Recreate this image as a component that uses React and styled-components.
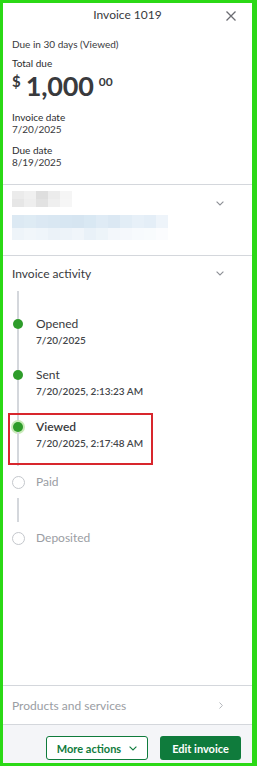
import styled, { createGlobalStyle } from 'styled-components';

const GlobalStyle = createGlobalStyle`
  html, body { margin: 0; padding: 0; }
  body {
    font-family: Lato, "Liberation Sans", sans-serif;
    color: #393a3d;
    background: #fff;
  }
  * { box-sizing: border-box; }
`;

const grayCells = ['#ebebeb', '#f0f0f0', '#dedede', '#ececec', '#f5f5f5', '#e6e6e6', '#eeeeee', '#e2e2e2', '#efefef', '#f6f6f6'];
const blueCells = [
    '#dce9f3', '#deebf4', '#dbe8f3', '#d9e7f2', '#d7e6f2', '#d6e5f1', '#d9e8f3', '#dfebf5', '#dbe8f3', '#e2edf6', '#e7f0f8', '#e4eef7', '#eef4fa',
    '#eef4f9', '#f1f6fa', '#eff5fa', '#ebf2f8', '#edf3f9', '#f0f5fa', '#e9f1f8', '#edf4f9', '#f3f7fb', '#f5f8fc', '#f7fafd', '#f8fbfd', '#fbfcfe',
];

const steps = [
    { label: 'Opened', date: '7/20/2025', done: true },
    { label: 'Sent', date: '7/20/2025, 2:13:23 AM', done: true },
    { label: 'Viewed', date: '7/20/2025, 2:17:48 AM', done: true, current: true },
    { label: 'Paid' },
    { label: 'Deposited', last: true },
];
const rowHeights = [51, 52, 55, 56, 40];

function Chevron({ dir = 'down', color = '#8d9096' }) {
    return dir === 'down'
        ? <svg width="8" height="5" viewBox="0 0 8 5"><path d="M0.6 0.6 L4 4 L7.4 0.6" fill="none" stroke={color} strokeWidth="1.1" /></svg>
        : <svg width="4" height="7" viewBox="0 0 4 7"><path d="M0.5 0.5 L3.4 3.5 L0.5 6.5" fill="none" stroke={color} strokeWidth="1" /></svg>;
}

export default function App() {
    return <>
        <GlobalStyle />
        <Panel>
            <Header>
                <span />
                <Title>Invoice 1019</Title>
                <Close aria-label="Close">
                    <svg width="10" height="10" viewBox="0 0 10 10"><path d="M0.5 0.5 L9.5 9.5 M9.5 0.5 L0.5 9.5" stroke="#6b6c72" strokeWidth="1.3" /></svg>
                </Close>
            </Header>

            <Summary>
                <Status>Due in 30 days (Viewed)</Status>
                <TotalLabel>Total due</TotalLabel>
                <Amount>
                    <Dollar>$</Dollar>
                    <Big>1,000</Big>
                    <Cents>00</Cents>
                </Amount>
                <Field $top={9}>
                    <FieldLabel>Invoice date</FieldLabel>
                    <FieldValue>7/20/2025</FieldValue>
                </Field>
                <Field $top={9}>
                    <FieldLabel>Due date</FieldLabel>
                    <FieldValue>8/19/2025</FieldValue>
                </Field>
            </Summary>

            <Customer>
                <Blurs>
                    <PixelGrid $cols={5} $w={12} $h={8}>
                        {grayCells.map((c, i) => <Pixel key={i} $color={c} />)}
                    </PixelGrid>
                    <PixelGrid $cols={13} $w={12} $h={12.5}>
                        {blueCells.map((c, i) => <Pixel key={i} $color={c} />)}
                    </PixelGrid>
                </Blurs>
                <ChevronBox $top={10}><Chevron /></ChevronBox>
            </Customer>

            <SectionHead>
                <SectionTitle>Invoice activity</SectionTitle>
                <Chevron />
            </SectionHead>

            <Timeline>
                <Lead><Line $h={17} /></Lead>
                {steps.map((s, i) => (
                    <Step key={s.label} $h={rowHeights[i]} $highlight={s.current}>
                        <Rail>
                            {s.done ? <Line $h={11} /> : <Gap $h={10} />}
                            {s.done ? <Dot $ring={s.current} /> : <Circle />}
                            {!s.last && <Line $grow $gapTop={s.done ? 0 : 9} />}
                        </Rail>
                        <StepText>
                            <StepLabel $done={s.done} $strong={s.current}>{s.label}</StepLabel>
                            {s.date && <StepDate>{s.date}</StepDate>}
                        </StepText>
                    </Step>
                ))}
            </Timeline>

            <Filler />

            <LinkRow>
                <LinkText>Products and services</LinkText>
                <Chevron dir="right" color="#b3b6bb" />
            </LinkRow>

            <Footer>
                <OutlineButton>More actions <Chevron color="#0f7b3c" /></OutlineButton>
                <PrimaryButton>Edit invoice</PrimaryButton>
            </Footer>
        </Panel>
    </>;
}

const Panel = styled.div`
    height: 766px;
    display: flex;
    flex-direction: column;
    border: 3px solid #2bd916;
    border-right-width: 5px;
    background: #fff;
`;

const Header = styled.header`
    height: 24px;
    display: grid;
    grid-template-columns: 1fr auto 1fr;
    align-items: center;
`;

const Title = styled.div`
    font-size: 12px;
    line-height: 24px;
    color: #393a3d;
`;

const Close = styled.div`
    justify-self: end;
    display: flex;
    padding-right: 16px;
    padding-top: 1px;
`;

const Summary = styled.section`
    padding: 10px 9px 16px;
    border-bottom: 1px solid #d4d7dc;
`;

const Status = styled.div`
    font-size: 10px;
    line-height: 14px;
`;

const TotalLabel = styled.div`
    font-size: 10px;
    line-height: 14px;
    margin-top: 5px;
    color: #2b2c2f;
`;

const Amount = styled.div`
    display: flex;
    align-items: flex-start;
    height: 32px;
    color: #393a3d;
    font-weight: 700;
`;

const Dollar = styled.span`
    font-size: 15px;
    line-height: 15px;
    margin-top: 4px;
    margin-right: 5px;
`;

const Big = styled.span`
    font-size: 27px;
    line-height: 32px;
    letter-spacing: -0.2px;
`;

const Cents = styled.span`
    font-size: 12px;
    line-height: 12px;
    margin-top: 6px;
    margin-left: 5px;
`;

const Field = styled.div`
    margin-top: ${p => p.$top}px;
`;

const FieldLabel = styled.div`
    font-size: 10px;
    line-height: 12px;
    color: #2b2c2f;
`;

const FieldValue = styled.div`
    font-size: 10px;
    line-height: 12px;
`;

const Customer = styled.section`
    height: 71px;
    display: flex;
    justify-content: space-between;
    padding: 6px 28px 0 9px;
    border-bottom: 1px solid #d4d7dc;
`;

const Blurs = styled.div`
    display: flex;
    flex-direction: column;
    gap: 8px;
`;

const PixelGrid = styled.div`
    display: grid;
    grid-template-columns: repeat(${p => p.$cols}, ${p => p.$w}px);
    grid-auto-rows: ${p => p.$h}px;
    filter: blur(0.6px);
`;

const Pixel = styled.div`
    background: ${p => p.$color};
`;

const ChevronBox = styled.div`
    display: flex;
    align-items: flex-start;
    padding-top: ${p => p.$top}px;
`;

const SectionHead = styled.div`
    height: 35px;
    display: flex;
    align-items: center;
    justify-content: space-between;
    padding: 0 28px 0 9px;
`;

const SectionTitle = styled.div`
    font-size: 12px;
`;

const Timeline = styled.div`
    padding-left: 9px;
`;

const Lead = styled.div`
    width: 12px;
    display: flex;
    justify-content: center;
`;

const Step = styled.div`
    position: relative;
    height: ${p => p.$h}px;
    display: grid;
    grid-template-columns: 12px 1fr;
    column-gap: 12px;

    ${p => p.$highlight && `
        &::after {
            content: '';
            position: absolute;
            left: -4px;
            top: 2px;
            width: 141px;
            height: 48px;
            border: 2px solid #d8262d;
        }
    `}
`;

const Rail = styled.div`
    display: flex;
    flex-direction: column;
    align-items: center;
`;

const Line = styled.div`
    width: 2px;
    background: #d4d7dc;
    height: ${p => p.$h ? `${p.$h}px` : 'auto'};
    flex: ${p => p.$grow ? 1 : 'none'};
    margin-top: ${p => p.$gapTop || 0}px;
`;

const Gap = styled.div`
    height: ${p => p.$h}px;
    flex: none;
`;

const Dot = styled.div`
    width: 10px;
    height: 10px;
    flex: none;
    border-radius: 50%;
    background: #2e9c2a;
    box-shadow: ${p => p.$ring ? '0 0 0 2px #c8eab8' : 'none'};
`;

const Circle = styled.div`
    width: 13px;
    height: 13px;
    flex: none;
    border-radius: 50%;
    border: 1.5px solid #c4c7cc;
`;

const StepText = styled.div`
    padding-top: 8px;
`;

const StepLabel = styled.div`
    font-size: 12px;
    line-height: 16px;
    color: ${p => p.$done ? '#393a3d' : '#9a9da3'};
    font-weight: ${p => p.$strong ? 600 : 400};
`;

const StepDate = styled.div`
    font-size: 10px;
    line-height: 16px;
    font-weight: 600;
    color: #44464a;
`;

const Filler = styled.div`
    flex: 1;
`;

const LinkRow = styled.div`
    height: 39px;
    border-top: 1px solid #d4d7dc;
    display: flex;
    align-items: center;
    justify-content: space-between;
    padding: 0 29px 0 9px;
`;

const LinkText = styled.div`
    font-size: 12px;
    color: #9a9da3;
`;

const Footer = styled.footer`
    height: 39px;
    border-top: 1px solid #d4d7dc;
    background: #f4f5f8;
    display: flex;
    justify-content: flex-end;
    align-items: flex-start;
    gap: 12px;
    padding: 11px 11px 0 0;
`;

const OutlineButton = styled.button`
    height: 24px;
    width: 102px;
    display: flex;
    align-items: center;
    justify-content: center;
    gap: 8px;
    border: 1px solid #0f7b3c;
    border-radius: 3px;
    background: #fff;
    color: #0f7b3c;
    font: 700 11px Lato, "Liberation Sans", sans-serif;
    padding: 0;
`;

const PrimaryButton = styled.button`
    height: 24px;
    width: 81px;
    border: none;
    border-radius: 3px;
    background: #0f7b3c;
    color: #fff;
    font: 700 11px Lato, "Liberation Sans", sans-serif;
    padding: 0;
`;
